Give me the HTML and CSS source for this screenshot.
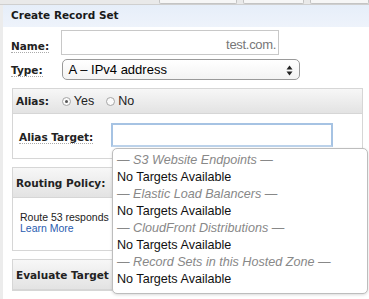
FILE: index.html
```html
<!DOCTYPE html>
<html>
<head>
<meta charset="utf-8">
<link rel="stylesheet" href="styles.css">
</head>
<body>
<div class="topbar">
  <span class="tab t1"></span><span class="tab t2"></span><span class="tab t3"></span>
</div>
<div class="dialog">
  <div class="title">Create Record Set</div>
  <div class="content">
    <div class="row name-row">
      <label class="lbl">Name:</label>
      <div class="input name-input"><span class="suffix">test.com.</span></div>
    </div>
    <div class="row type-row">
      <label class="lbl">Type:</label>
      <div class="select">
        <span>A – IPv4 address</span>
        <svg class="arrows" width="7" height="11" viewBox="0 0 7 11"><path d="M3.5 0.5 L6.5 4.5 L0.5 4.5 Z M3.5 10.5 L6.5 6.5 L0.5 6.5 Z" fill="#222"/></svg>
      </div>
    </div>

    <div class="panel alias-panel">
      <div class="phead alias-head">
        <span class="lbl">Alias:</span>
        <span class="radio on"></span><span class="rtext">Yes</span>
        <span class="radio"></span><span class="rtext">No</span>
      </div>
      <div class="pbody alias-body">
        <span class="lbl">Alias Target:</span>
        <div class="input focus"></div>
      </div>
    </div>

    <div class="panel routing-panel">
      <div class="phead routing-head"><span class="lbl">Routing Policy:</span></div>
      <div class="pbody routing-body">
        <div class="small">Route 53 responds</div>
        <a class="link">Learn More</a>
      </div>
    </div>

    <div class="panel eval-panel">
      <div class="phead eval-head"><span class="lbl">Evaluate Target</span></div>
    </div>

    <div class="dropdown">
      <div class="grp">— S3 Website Endpoints —</div>
      <div class="opt">No Targets Available</div>
      <div class="grp">— Elastic Load Balancers —</div>
      <div class="opt">No Targets Available</div>
      <div class="grp">— CloudFront Distributions —</div>
      <div class="opt">No Targets Available</div>
      <div class="grp">— Record Sets in this Hosted Zone —</div>
      <div class="opt">No Targets Available</div>
    </div>
  </div>
</div>
</body>
</html>
```
FILE: styles.css
```css
html, body { margin: 0; padding: 0; }
body {
  width: 369px;
  height: 299px;
  overflow: hidden;
  background: #fff;
  font-family: "Liberation Sans", Arial, sans-serif;
  color: #000;
}
.topbar {
  height: 4px;
  background: #e9e9e9;
  border-bottom: 1px solid #cfcfcf;
  display: flex;
  padding-left: 159px;
  gap: 6px;
  overflow: hidden;
}
.tab {
  display: block;
  height: 3px;
  background: #f6f6f6;
  border: 1px solid #c4c4c4;
  border-top: none;
  border-radius: 0 0 2px 2px;
}
.t1 { width: 80px; }
.t2 { width: 63px; }
.t3 { width: 60px; }
.dialog {
  border-left: 3px solid #ececec;
  height: 294px;
}
.title {
  height: 22px;
  line-height: 21px;
  padding-left: 8px;
  font-family: "DejaVu Sans", Verdana, sans-serif;
  font-weight: bold;
  font-size: 10.5px;
  color: #1a1a1a;
  background: linear-gradient(#e6eef9, #eef3fb);
}
.content {
  position: relative;
  padding-left: 8px;
}
.lbl {
  font-family: "DejaVu Sans", Verdana, sans-serif;
  font-weight: bold;
  font-size: 10.5px;
  color: #222;
  border-bottom: 1px dotted #aaa;
  line-height: 12px;
}
.row {
  display: flex;
  align-items: flex-end;
}
.name-row { margin-top: 3px; height: 25px; }
.name-row .lbl { margin-bottom: 2px; }
.input {
  box-sizing: border-box;
  border: 1px solid #c8c8c8;
  background: #fff;
}
.name-input {
  margin-left: 12px;
  width: 218px;
  height: 25px;
  display: flex;
  align-items: center;
  justify-content: flex-end;
  padding: 3px 2px 0 0;
}
.suffix { font-size: 13px; color: #777; letter-spacing: -0.3px; }
.type-row { margin-top: 4px; height: 21px; }
.type-row .lbl { margin-bottom: 3px; }
.select {
  margin-left: 19px;
  box-sizing: border-box;
  width: 238px;
  height: 21px;
  border: 1px solid #9a9a9a;
  border-radius: 5px;
  background: linear-gradient(#fff, #f3f3f3);
  display: flex;
  align-items: center;
  justify-content: space-between;
  padding: 0 6px 0 6px;
  font-size: 13px;
}
.arrows { margin-top: 1px; }
.panel {
  width: 351px;
  box-sizing: border-box;
  margin-left: 1px;
  border: 1px solid #d6d6d6;
  background: #fff;
}
.phead {
  display: flex;
  align-items: center;
  padding-left: 3px;
  background: linear-gradient(#f7f7f7, #e3e3e3);
  border-bottom: 1px solid #d6d6d6;
}
.phead .lbl { border-bottom: none; }
.alias-panel { margin-top: 8px; height: 71px; }
.alias-head { height: 24px; }
.radio {
  width: 7px;
  height: 7px;
  border: 1px solid #a5a5a5;
  border-radius: 50%;
  background: #fafafa;
  margin-left: 12px;
  margin-right: 3px;
  position: relative;
  box-sizing: content-box;
}
.alias-head .lbl + .radio { margin-left: 13px; }
.radio.on::after {
  content: "";
  position: absolute;
  left: 2px; top: 2px;
  width: 3px; height: 3px;
  border-radius: 50%;
  background: #555;
}
.rtext { font-size: 12.5px; color: #222; }
.alias-body {
  display: flex;
  align-items: center;
  padding-left: 6px;
  height: 44px;
}
.alias-body .lbl { margin-top: 3px; }
.focus {
  margin-left: 18px;
  width: 222px;
  height: 24px;
  border: 2px solid #a6c3e3;
  border-bottom-color: #bcd2ea;
  margin-top: -2px;
}
.routing-panel { margin-top: 8px; height: 84px; }
.routing-head { height: 29px; }
.routing-body { padding: 14px 0 0 7px; }
.small { font-size: 10.5px; color: #222; white-space: nowrap; line-height: 11px; }
.link { display: block; font-size: 10.5px; color: #2a5db0; line-height: 11px; }
.eval-panel { margin-top: 8px; height: 32px; border-bottom: 2px solid #d6d6d6; }
.eval-head { height: 29px; border-bottom: none; }
.dropdown {
  position: absolute;
  left: 109px;
  top: 118px;
  width: 256px;
  height: 146px;
  box-sizing: border-box;
  background: #fff;
  border: 1px solid #bdbdbd;
  border-radius: 5px;
  box-shadow: 0 1px 3px rgba(0,0,0,0.15);
  padding: 3px 0 0 4px;
  font-size: 12.6px;
  overflow: hidden;
}
.grp, .opt { height: 17px; line-height: 17px; white-space: nowrap; }
.grp { color: #888; font-style: italic; }
.opt { color: #111; }
```
